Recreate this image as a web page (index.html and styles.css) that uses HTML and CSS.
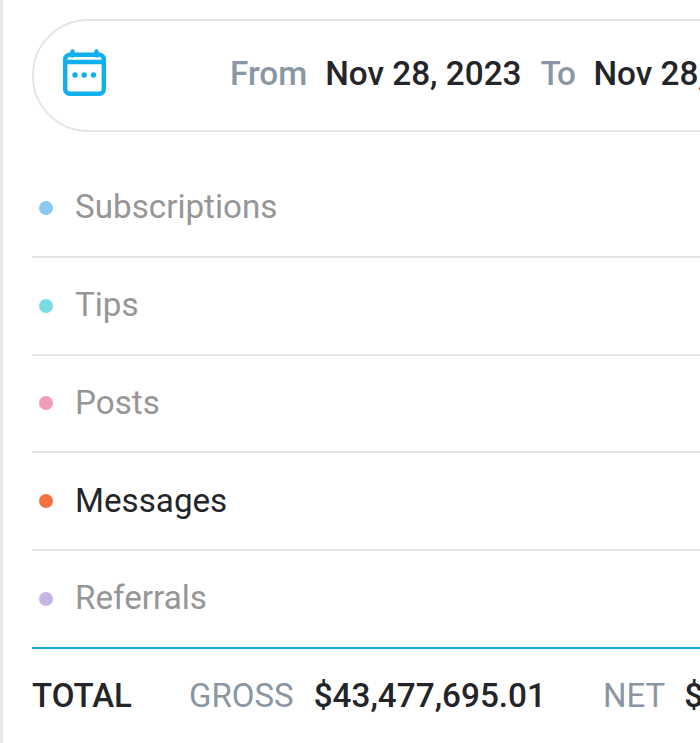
FILE: index.html
```html
<!DOCTYPE html>
<html lang="en">
<head>
<meta charset="utf-8">
<title>Statements</title>
<link rel="stylesheet" href="styles.css">
</head>
<body>
<main class="page">
  <div class="range">
    <svg class="cal" viewBox="0 0 43 48" width="43" height="48" aria-hidden="true">
      <path class="cal-line" d="M9.5 2.5v4M33.5 2.5v4"/>
      <rect class="cal-line" x="2.2" y="5.7" width="38.6" height="39.1" rx="4.5"/>
      <path class="cal-line" d="M2 13h39"/>
      <circle class="cal-dot" cx="12" cy="26" r="2.7"/>
      <circle class="cal-dot" cx="21.2" cy="26" r="2.7"/>
      <circle class="cal-dot" cx="30.5" cy="26" r="2.7"/>
    </svg>
    <div class="dates">
      <span class="lbl">From</span><span class="date">Nov 28, 2023</span>
      <span class="lbl to">To</span><span class="date">Nov 28, 2023</span>
    </div>
  </div>
  <ul class="rows">
    <li class="row"><span class="dot subs"></span>Subscriptions</li>
    <li class="row"><span class="dot tips"></span>Tips</li>
    <li class="row"><span class="dot posts"></span>Posts</li>
    <li class="row active"><span class="dot msgs"></span>Messages</li>
    <li class="row last"><span class="dot refs"></span>Referrals</li>
  </ul>
  <div class="total">
    <span class="total-h">TOTAL</span>
    <span class="lbl small gross">GROSS</span><span class="amt">$43,477,695.01</span>
    <span class="lbl small net">NET</span><span class="amt">$34,782,156.01</span>
  </div>
</main>
</body>
</html>
```
FILE: styles.css
```css
* { box-sizing: border-box; }
html, body { margin: 0; padding: 0; background: #fff; }
body { width: 700px; height: 743px; overflow: hidden; font-family: Roboto, "Liberation Sans", sans-serif; }
.page { width: 700px; height: 743px; overflow: hidden; border-left: 3px solid #e9e9e9; padding: 19px 0 0 29px; }
.range { width: 1000px; height: 113px; display: flex; align-items: center; border: 2px solid #e3e5ea; border-radius: 56px; padding: 0 0 0 29px; }
.cal { flex: none; display: block; margin-bottom: 5px; }
.cal-line { fill: none; stroke: #0fb0ec; stroke-width: 4.4; stroke-linecap: round; }
.cal-dot { fill: #0fb0ec; }
.dates { display: flex; align-items: center; margin-left: 124px; margin-bottom: 4px; font-size: 33.3px; white-space: nowrap; font-weight: 500; }
.lbl { color: #8a96a3; }
.date { color: #242529; margin-left: 18px; }
.to { margin-left: 19px; letter-spacing: -1.5px; }
.to + .date { margin-left: 19px; }
.rows { list-style: none; margin: 28px 0 0; padding: 0; width: 700px; }
.row { height: 97.75px; display: flex; align-items: center; border-bottom: 2px solid #e3e5ea; font-size: 33.2px; color: #969696; white-space: nowrap; padding-bottom: 2px; }
.row.active { color: #242529; }
.row.last { border-bottom: 2px solid #14a9d6; }
.dot { width: 14px; height: 14px; border-radius: 50%; margin: 2px 22px 0 7px; flex: none; }
.subs { background: #8cc8f5; }
.tips { background: #7adde6; }
.posts { background: #f29cbb; }
.msgs { background: #f4713d; }
.refs { background: #c5b5e6; }
.total { display: flex; align-items: center; height: 92px; white-space: nowrap; font-size: 33px; padding-top: 2px; }
.total-h { font-weight: 500; color: #242529; }
.small { font-weight: 400; }
.gross { margin-left: 57px; }
.gross + .amt { margin-left: 20px; }
.net { margin-left: 57px; }
.amt { font-weight: 500; color: #242529; margin-left: 19px; font-size: 33.3px; }
```
